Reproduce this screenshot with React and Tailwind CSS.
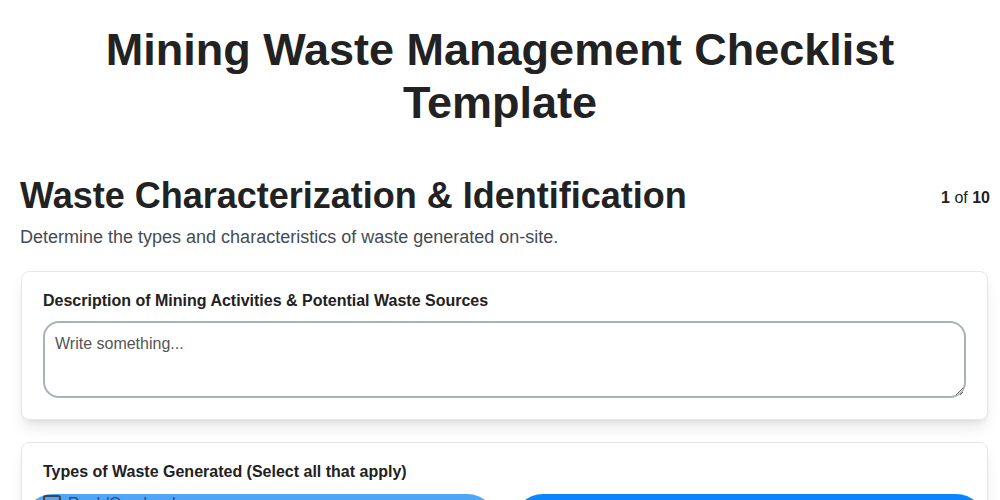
import React from "react";

const wasteTypes = [
  { label: "Rock/Overburden", tone: "light" },
  { label: "Tailings", tone: "dark" },
];

const App = () => {
  return (
    <div
      className="min-h-screen bg-white text-[#222222]"
      style={{ fontFamily: '"Liberation Sans", Arial, sans-serif' }}
    >
      {/* Page title */}
      <div className="px-5 pt-[23px]">
        <h1 className="text-center text-[45px] font-bold leading-[53px]">
          Mining Waste Management Checklist Template
        </h1>
      </div>

      <div className="pl-5 pr-[10px]">
        {/* Section header */}
        <div className="mt-[45px] flex items-start justify-between">
          <h2 className="text-[36px] font-bold leading-[44px]">
            Waste Characterization &amp; Identification
          </h2>
          <div className="mt-[12px] text-[16px]">
            <span className="font-bold">1</span> of{" "}
            <span className="font-bold">10</span>
          </div>
        </div>
        <p className="mt-[6px] text-[18px] leading-[27px] text-[#444b55]">
          Determine the types and characteristics of waste generated on-site.
        </p>

        {/* Description card */}
        <div className="mt-[20px] ml-[1px] mr-[2px] bg-white rounded-lg border border-gray-200 shadow-lg px-[21px] pt-[20px] pb-[21px]">
          <label className="block text-[16px] font-bold leading-[18px]">
            Description of Mining Activities &amp; Potential Waste Sources
          </label>
          <textarea
            placeholder="Write something..."
            className="mt-[11px] block w-full h-[77px] rounded-2xl border-2 border-[#aab1b9] px-[10px] py-[9px] text-[16px] placeholder:text-[#555555] outline-none"
          />
        </div>

        {/* Waste types card */}
        <div className="mt-[22px] ml-[1px] mr-[2px] bg-white rounded-lg border border-gray-200 shadow-lg px-[1px] pt-[20px] pb-4">
          <label className="block px-[20px] text-[16px] font-bold leading-[18px]">
            Types of Waste Generated (Select all that apply)
          </label>
          <div className="mt-[13px] grid grid-cols-2 gap-4">
            {wasteTypes.map((w) => (
              <div
                key={w.label}
                className={
                  w.tone === "light"
                    ? "h-[60px] rounded-[30px] bg-[#50a5f6] px-5 flex items-start"
                    : "h-[60px] rounded-[30px] bg-[#0a84ff] px-5 flex items-center"
                }
              >
                <div
                  className={
                    w.tone === "light"
                      ? "flex items-center gap-[7px] -mt-[2px]"
                      : "flex items-center gap-[7px]"
                  }
                >
                  <span className="w-[18px] h-[18px] rounded-[3px] border-2 border-[#3d4450] bg-transparent" />
                  <span
                    className={
                      w.tone === "light"
                        ? "text-[16px] text-[#2a4b80]"
                        : "text-[16px] text-white"
                    }
                  >
                    {w.label}
                  </span>
                </div>
              </div>
            ))}
          </div>
        </div>
      </div>
    </div>
  );
};

export default App;
